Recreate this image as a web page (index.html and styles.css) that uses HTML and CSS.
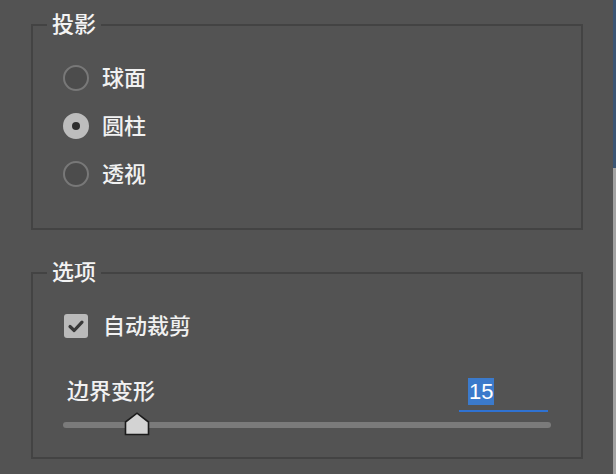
FILE: index.html
```html
<!DOCTYPE html>
<html lang="zh-CN">
<head>
<meta charset="utf-8">
<title>投影</title>
<link rel="stylesheet" href="styles.css">
</head>
<body>
<div class="page">
  <main class="panel">
    <fieldset class="group group-projection">
      <legend class="legend">投影</legend>
      <div class="radio-row">
        <span class="radio"></span><span class="label">球面</span>
      </div>
      <div class="radio-row">
        <span class="radio radio-on"><span class="dot"></span></span><span class="label">圆柱</span>
      </div>
      <div class="radio-row">
        <span class="radio"></span><span class="label">透视</span>
      </div>
    </fieldset>

    <fieldset class="group group-options">
      <legend class="legend">选项</legend>
      <div class="check-row">
        <span class="checkbox">
          <svg width="24" height="24" viewBox="0 0 24 24"><path d="M6 12.5 L10.2 16.5 L18 8.2" fill="none" stroke="#383838" stroke-width="3.2" stroke-linecap="round" stroke-linejoin="round"/></svg>
        </span>
        <span class="label">自动裁剪</span>
      </div>
      <div class="slider-head">
        <span class="label slider-label">边界变形</span>
        <span class="num-field"><span class="num-sel">15</span></span>
      </div>
      <div class="slider">
        <div class="track"></div>
        <svg class="thumb" width="26" height="24" viewBox="0 0 26 24"><path d="M1.5 10 L13 1.2 L24.5 10 L24.5 22.5 L1.5 22.5 Z" fill="#d3d3d3" stroke="#1b1b1b" stroke-width="1.6" stroke-linejoin="miter"/></svg>
      </div>
    </fieldset>
  </main>
  <aside class="edge">
    <div class="edge-top"></div>
    <div class="edge-bottom"></div>
  </aside>
</div>
</body>
</html>
```

FILE: styles.css
```css
html, body {
  margin: 0;
  padding: 0;
  background: #535353;
}

body {
  font-family: "Noto Sans CJK SC", "Noto Sans", sans-serif;
  color: #f1f1f1;
}

.page {
  display: flex;
  width: 616px;
  height: 474px;
  overflow: hidden;
}

.panel {
  flex: 1;
  padding-top: 11px;
}

.group {
  box-sizing: border-box;
  width: 552px;
  margin: 0 0 0 31px;
  border: 2px solid #434343;
  padding: 15px 30px 30px 30px;
  min-width: 0;
}

.group-options {
  margin-top: 29px;
  padding-bottom: 29px;
}

.legend {
  font-size: 22px;
  line-height: 22px;
  font-weight: 500;
  padding: 0 5px 6px 5px;
  margin-left: -16px;
  color: #f3f3f3;
}

.label {
  box-sizing: border-box;
  font-size: 22px;
  line-height: 28px;
  padding-bottom: 4px;
  font-weight: 500;
  color: #f1f1f1;
}

.radio-row {
  display: flex;
  align-items: center;
  height: 48px;
  gap: 13px;
}

.radio {
  box-sizing: border-box;
  width: 26px;
  height: 26px;
  border-radius: 50%;
  border: 2px solid #787878;
  background: #4c4c4c;
  display: flex;
  align-items: center;
  justify-content: center;
}

.radio-on {
  border-color: #bdbdbd;
  background: #bdbdbd;
}

.dot {
  width: 8px;
  height: 8px;
  border-radius: 50%;
  background: #2e2e2e;
}

.check-row {
  display: flex;
  align-items: center;
  height: 48px;
  gap: 15px;
  padding-left: 1px;
}

.checkbox {
  width: 24px;
  height: 24px;
  border-radius: 3px;
  background: #bababa;
  display: flex;
}

.slider-head {
  display: flex;
  justify-content: space-between;
  align-items: flex-start;
  height: 34px;
  margin-top: 28px;
}

.slider-label {
  margin-left: 4px;
  line-height: 22px;
  padding-bottom: 0;
}

.num-field {
  box-sizing: border-box;
  width: 89px;
  height: 34px;
  margin-right: 3px;
  padding-left: 9px;
  border-bottom: 2px solid #2f72d2;
  font-family: "Liberation Sans", Arial, sans-serif;
  font-size: 22px;
  line-height: 27px;
}

.num-sel {
  display: inline-block;
  background: #3b7acb;
  color: #ffffff;
  padding: 0 1px;
}

.slider {
  position: relative;
  margin-top: 10px;
  height: 6px;
}

.track {
  height: 6px;
  border-radius: 3px;
  background: #7b7b7b;
}

.thumb {
  position: absolute;
  left: 61px;
  top: -10px;
}

.edge {
  width: 3px;
  display: flex;
  flex-direction: column;
}

.edge-top {
  height: 168px;
  background: #3b5574;
}

.edge-bottom {
  flex: 1;
  background: #a2a2a2;
}
```
